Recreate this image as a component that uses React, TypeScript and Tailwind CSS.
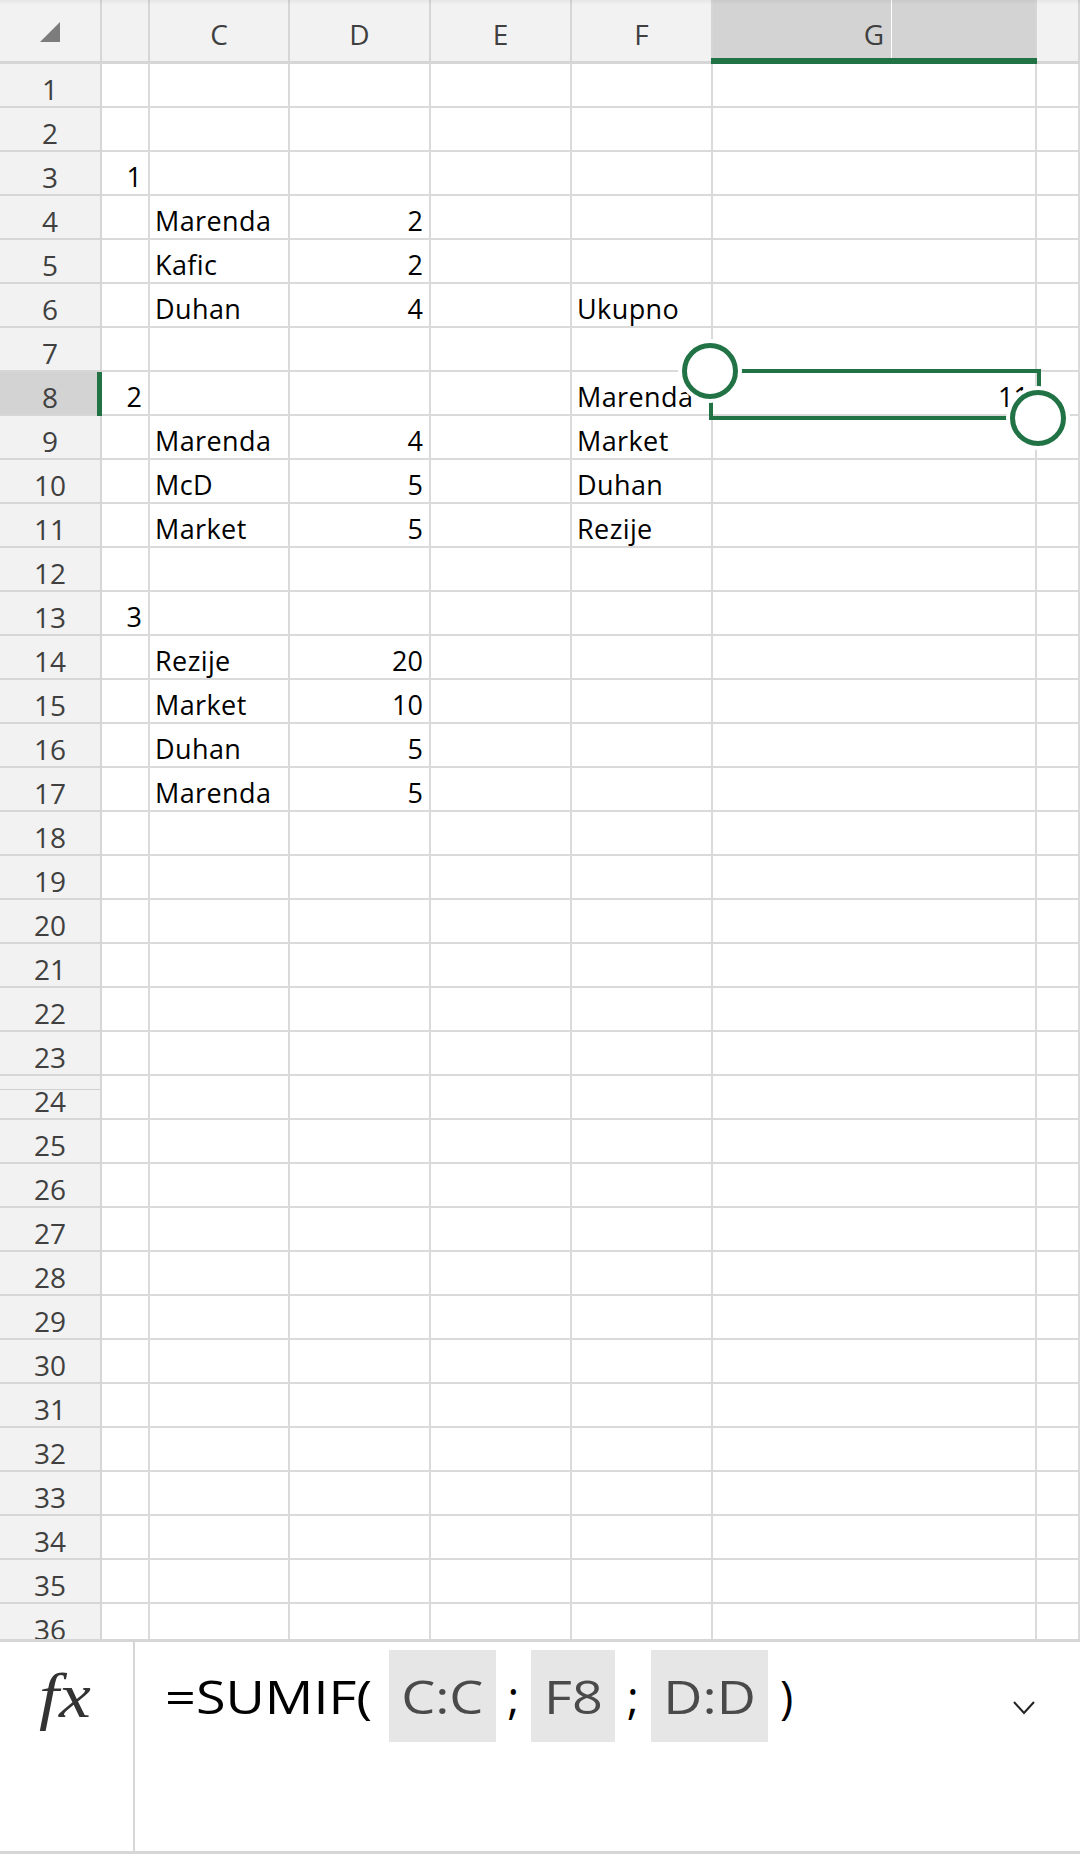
import React from 'react';

const cells: Record<number, Record<number, string | number>> = {
  3: { 0: 1 },
  4: { 1: 'Marenda', 2: 2 },
  5: { 1: 'Kafic', 2: 2 },
  6: { 1: 'Duhan', 2: 4, 4: 'Ukupno' },
  8: { 0: 2, 4: 'Marenda', 5: 11 },
  9: { 1: 'Marenda', 2: 4, 4: 'Market' },
  10: { 1: 'McD', 2: 5, 4: 'Duhan' },
  11: { 1: 'Market', 2: 5, 4: 'Rezije' },
  13: { 0: 3 },
  14: { 1: 'Rezije', 2: 20 },
  15: { 1: 'Market', 2: 10 },
  16: { 1: 'Duhan', 2: 5 },
  17: { 1: 'Marenda', 2: 5 },
};

const headers = ['', 'C', 'D', 'E', 'F', 'G', ''];
const rows = Array.from({ length: 36 }, (_, i) => i + 1);
const font = { fontFamily: '"Open Sans", "Noto Sans", sans-serif' };

function HeaderRow() {
  return (
    <>
      <div className="relative h-[64px] bg-[#f2f2f2] border-r-2 border-b-[3px] border-[#d6d6d6] flex items-center justify-center">
        <svg width="20" height="20" viewBox="0 0 20 20" className="mt-[3px]">
          <polygon points="0,20 20,20 20,0" fill="#7c7c7c" />
        </svg>
      </div>
      {headers.map((h, i) => {
        const sel = i === 5;
        return (
          <div
            key={i}
            className={
              sel
                ? 'relative h-[64px] bg-[#d3d3d3] border-r-2 border-b-[3px] border-[#d6d6d6] flex items-center justify-center pt-[6px] text-[28px] leading-[36px] text-[#404040]'
                : 'relative h-[64px] bg-[#f2f2f2] border-r-2 border-b-[3px] border-[#d6d6d6] flex items-center justify-center pt-[6px] text-[28px] leading-[36px] text-[#404040]'
            }
          >
            {h}
            {sel && (
              <>
                <div className="absolute top-0 left-[178px] w-px h-[58px] bg-white" />
                <div className="absolute left-[-2px] right-[-2px] bottom-[-3px] h-[6px] bg-[#217346]" />
              </>
            )}
          </div>
        );
      })}
    </>
  );
}

function Row({ n }: { n: number }) {
  const data = cells[n] || {};
  const selRow = n === 8;
  return (
    <>
      <div
        className={
          selRow
            ? 'relative h-[44px] bg-[#d3d3d3] border-r-2 border-b-2 border-[#d6d6d6] flex items-end justify-center text-[28px] leading-[34px] text-[#404040]'
            : 'relative h-[44px] bg-[#f2f2f2] border-r-2 border-b-2 border-[#d6d6d6] flex items-end justify-center text-[28px] leading-[34px] text-[#404040]'
        }
      >
        {n}
        {selRow && <div className="absolute right-[-2px] top-0 bottom-[-2px] w-[5px] bg-[#217346]" />}
        {n === 24 && <div className="absolute left-0 right-0 top-[13px] h-px bg-[#d0d0d0]" />}
      </div>
      {[0, 1, 2, 3, 4, 5, 6].map((c) => {
        const v = data[c];
        const num = typeof v === 'number';
        return (
          <div
            key={c}
            className={
              num
                ? 'h-[44px] border-r-2 border-b-2 border-[#dadada] bg-white flex items-end justify-end pr-[6px] text-[27px] leading-[34px] text-black whitespace-nowrap'
                : 'h-[44px] border-r-2 border-b-2 border-[#dadada] bg-white flex items-end justify-start pl-[5px] text-[27px] leading-[34px] tracking-[0.4px] text-black whitespace-nowrap'
            }
          >
            {v !== undefined ? String(v) : ''}
          </div>
        );
      })}
    </>
  );
}

function Selection() {
  return (
    <>
      <div className="absolute left-[709px] top-[369px] w-[332px] h-[51px] border-4 border-[#217346]" />
      <div className="absolute left-[682px] top-[343px] w-[56px] h-[56px] rounded-full border-[5px] border-[#217346] bg-white shadow-[0_0_0_4px_#ffffff]" />
      <div className="absolute left-[1010px] top-[390px] w-[56px] h-[56px] rounded-full border-[5px] border-[#217346] bg-white shadow-[0_0_0_4px_#ffffff]" />
    </>
  );
}

function FormulaBar() {
  const box = 'h-[92px] bg-[#e6e6e6] text-[#4a4a4a] flex items-center justify-center';
  return (
    <div className="flex h-[215px] border-t-[3px] border-b-[3px] border-[#d6d6d6] bg-white">
      <div className="w-[135px] border-r-2 border-[#d6d6d6] flex justify-center">
        <div
          className="mt-[22px] h-[64px] leading-[64px] text-[64px] italic text-[#333333] pr-[2px] scale-x-[1.12]"
          style={{ fontFamily: '"Liberation Serif", "DejaVu Serif", serif' }}
        >
          fx
        </div>
      </div>
      <div className="flex-1 flex items-start">
        <div className="mt-[8px] flex items-center h-[92px] text-[45px] leading-none text-black">
          <span className="w-[254px] pl-[30px]">
            <span className="inline-block origin-left scale-x-[1.2]">=SUMIF(</span>
          </span>
          <span className={`${box} w-[107px]`}>
            <span className="inline-block scale-x-[1.2]">C:C</span>
          </span>
          <span className="w-[35px] text-center">;</span>
          <span className={`${box} w-[84px]`}>
            <span className="inline-block scale-x-[1.2]">F8</span>
          </span>
          <span className="w-[36px] text-center">;</span>
          <span className={`${box} w-[117px]`}>
            <span className="inline-block scale-x-[1.2]">D:D</span>
          </span>
          <span className="ml-[12px]">)</span>
        </div>
        <div className="ml-auto mr-[44px] mt-[58px]">
          <svg width="24" height="15" viewBox="0 0 24 15">
            <polyline points="2,2 12,13 22,2" fill="none" stroke="#222" strokeWidth="2" />
          </svg>
        </div>
      </div>
    </div>
  );
}

export default function App() {
  return (
    <div className="w-[1080px] h-[1854px] bg-white overflow-hidden" style={font}>
      <div className="relative h-[1639px] overflow-hidden">
        <div className="grid grid-cols-[102px_48px_140px_141px_141px_141px_324px_43px]">
          <HeaderRow />
          {rows.map((n) => (
            <Row key={n} n={n} />
          ))}
        </div>
        <div className="absolute top-0 left-0 right-0 h-[5px] bg-gradient-to-b from-black/5 to-transparent" />
        <Selection />
      </div>
      <FormulaBar />
    </div>
  );
}
